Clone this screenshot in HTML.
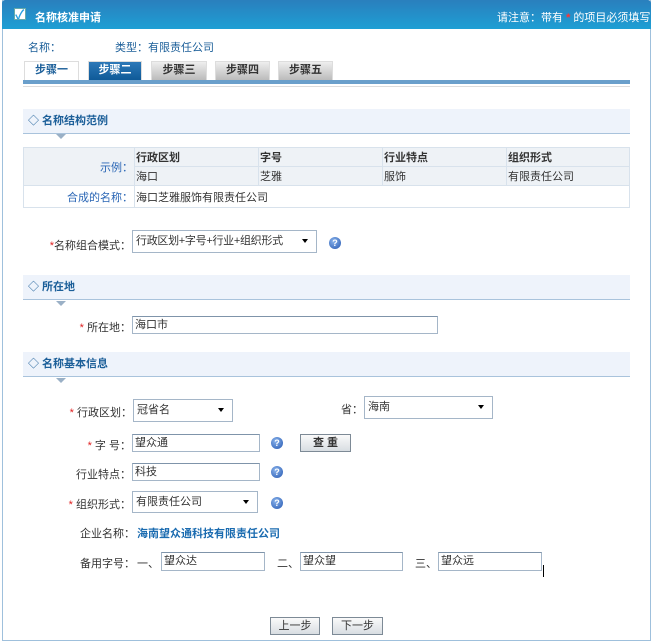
<!DOCTYPE html>
<html><head><meta charset="utf-8"><style>
*{margin:0;padding:0;box-sizing:border-box}
body{width:653px;height:641px;background:#fff;font-family:"Liberation Sans","Noto Sans CJK SC",sans-serif;font-size:11px;color:#333;position:relative;overflow:hidden}
.a{position:absolute;white-space:nowrap}
.r{position:absolute;white-space:nowrap;text-align:right;left:0}
.frame{position:absolute;left:2px;top:0;width:649px;height:641px;border:1px solid #9fc0dc;border-top:none}
.hdr{position:absolute;left:2px;top:0;width:649px;height:29px;background:linear-gradient(#2a7fbd,#1e9fd4);border-radius:3px 3px 0 0}
.tab{position:absolute;top:61px;height:19px;font-weight:bold;text-align:center;line-height:17px;border:1px solid #ddd;border-bottom:none}
.sec{position:absolute;left:23px;width:607px;height:25px;background:#eef3fb;border-bottom:1px solid #a9c3dc;color:#1c5f99;font-weight:bold;line-height:24px;padding-left:19px}
.sec:before{content:"◇";position:absolute;left:5px;font-weight:normal;color:#1c5f99}
.tri{position:absolute;left:56px;width:0;height:0;border-left:5px solid transparent;border-right:5px solid transparent;border-top:5px solid #9ab0c6}
.in{position:absolute;border:1px solid #a5b6c8;border-top-color:#7f94aa;background:#fff;padding-left:2px;line-height:16px}
.sel{position:absolute;border:1px solid #a5b6c8;background:#fff;padding-left:3px}
.sel:after{content:"";position:absolute;right:8px;top:8px;border-left:3px solid transparent;border-right:3px solid transparent;border-top:4px solid #000}
.help{position:absolute;width:12px;height:12px;border-radius:50%;background:radial-gradient(circle at 40% 35%,#8ab4ec,#2456b0);color:#fff;font-size:9px;font-weight:bold;text-align:center;line-height:12px}
.star{color:#e02020}
.btn{position:absolute;height:18px;border:1px solid #7d8a96;background:linear-gradient(#fafafa,#d8dde2);text-align:center;line-height:16px}
td{border:1px solid #d8e2ec;height:19px;padding:0 1px}
</style></head><body>
<div class="frame"></div>
<div class="hdr"></div>
<div class="a" style="left:14px;top:8px;width:12px;height:12px;background:#fff;border:1px solid #6aa;"></div>
<div class="a" style="left:15px;top:4px;color:#2aa0e0;font-weight:bold;font-size:13px">✓</div>
<div class="a" style="left:35px;top:9px;color:#fff;font-weight:bold">名称核准申请</div>
<div class="a" style="left:497px;top:9px;color:#fff">请注意：带有 <span style="color:#f33;font-weight:bold">*</span> 的项目必须填写</div>
<div class="a" style="left:28px;top:39px;color:#1c5f99">名称：</div>
<div class="a" style="left:115px;top:39px;color:#1c5f99">类型：有限责任公司</div>
<div class="tab" style="left:24px;width:55px;background:#fff;color:#1c5f99">步骤一</div>
<div class="tab" style="left:88px;width:54px;background:linear-gradient(#2c78b8,#0f5a98);color:#fff">步骤二</div>
<div class="tab" style="left:151px;width:56px;background:linear-gradient(#eee,#bbb)">步骤三</div>
<div class="tab" style="left:215px;width:55px;background:linear-gradient(#eee,#bbb)">步骤四</div>
<div class="tab" style="left:278px;width:55px;background:linear-gradient(#eee,#bbb)">步骤五</div>
<div class="a" style="left:23px;top:80px;width:607px;height:4px;background:#6a9fcb"></div>
<div class="a" style="left:23px;top:86px;width:607px;height:1px;background:#ddd"></div>

<div class="sec" style="top:109px">名称结构范例</div><div class="tri" style="top:134px"></div>
<table class="a" style="left:23px;top:147px;width:607px;border-collapse:collapse;font-size:11px">
<tr style="background:#eef2f6;font-weight:bold"><td rowspan="2" style="width:111px;text-align:right;color:#2a66b5;font-weight:normal">示例：</td><td style="width:124px">行政区划</td><td style="width:124px">字号</td><td style="width:124px">行业特点</td><td>组织形式</td></tr>
<tr style="background:#eef2f6"><td>海口</td><td>芝雅</td><td>服饰</td><td>有限责任公司</td></tr>
<tr><td style="text-align:right;color:#2a66b5;height:22px">合成的名称：</td><td colspan="4">海口芝雅服饰有限责任公司</td></tr>
</table>
<div class="r" style="width:131px;top:237px"><span class="star">*</span>名称组合模式：</div>
<div class="sel" style="left:132px;top:230px;width:185px;height:23px;line-height:20px;letter-spacing:-0.3px">行政区划+字号+行业+组织形式</div>
<div class="help" style="left:329px;top:237px">?</div>

<div class="sec" style="top:275px">所在地</div><div class="tri" style="top:301px"></div>
<div class="r" style="width:131px;top:319px"><span class="star">*</span> 所在地：</div>
<div class="in" style="left:132px;top:316px;width:306px;height:18px">海口市</div>

<div class="sec" style="top:352px">名称基本信息</div><div class="tri" style="top:378px"></div>
<div class="r" style="width:132px;top:404px"><span class="star">*</span> 行政区划：</div>
<div class="sel" style="left:133px;top:399px;width:100px;height:23px;line-height:20px">冠省名</div>
<div class="a" style="left:341px;top:401px">省：</div>
<div class="sel" style="left:364px;top:396px;width:129px;height:23px;line-height:20px">海南</div>
<div class="r" style="width:131px;top:437px"><span class="star">*</span> 字 号：</div>
<div class="in" style="left:132px;top:434px;width:128px;height:18px">望众通</div>
<div class="help" style="left:271px;top:437px">?</div>
<div class="btn" style="left:300px;top:434px;width:51px;font-weight:bold">查 重</div>
<div class="r" style="width:131px;top:466px">行业特点：</div>
<div class="in" style="left:132px;top:463px;width:128px;height:18px">科技</div>
<div class="help" style="left:271px;top:466px">?</div>
<div class="r" style="width:131px;top:496px"><span class="star">*</span> 组织形式：</div>
<div class="sel" style="left:132px;top:491px;width:126px;height:22px;line-height:20px">有限责任公司</div>
<div class="help" style="left:271px;top:497px">?</div>
<div class="a" style="left:80px;top:525px">企业名称：</div>
<div class="a" style="left:137px;top:525px;color:#1a6bb0;font-weight:bold">海南望众通科技有限责任公司</div>
<div class="a" style="left:80px;top:555px">备用字号：</div>
<div class="a" style="left:137px;top:555px">一、</div>
<div class="in" style="left:161px;top:552px;width:104px;height:19px">望众达</div>
<div class="a" style="left:277px;top:555px">二、</div>
<div class="in" style="left:300px;top:552px;width:103px;height:19px">望众望</div>
<div class="a" style="left:415px;top:555px">三、</div>
<div class="in" style="left:438px;top:552px;width:104px;height:19px">望众远</div>
<div class="a" style="left:543px;top:565px;width:1px;height:12px;background:#000"></div>
<div class="btn" style="left:270px;top:617px;width:50px">上一步</div>
<div class="btn" style="left:332px;top:617px;width:51px">下一步</div>
</body></html>
